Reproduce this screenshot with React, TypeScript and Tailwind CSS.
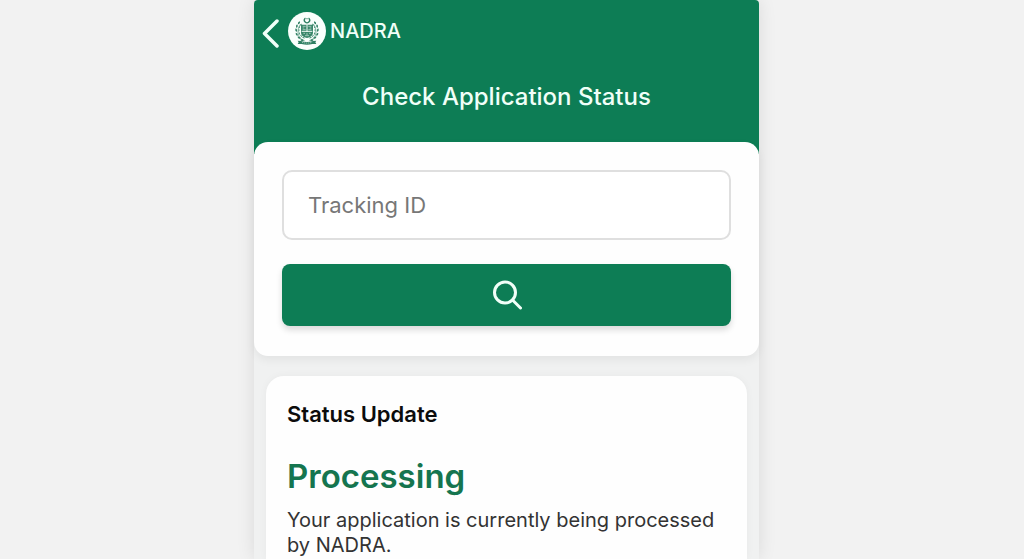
import { useState } from 'react';

const leaves = [
  { x: 43, y: 84, r: 70 },
  { x: 34, y: 77, r: 50 },
  { x: 27, y: 67, r: 25 },
  { x: 25, y: 55, r: 5 },
  { x: 27, y: 43, r: -15 },
  { x: 33, y: 33, r: -35 },
];

function Branch() {
  return (
    <g>
      <path d="M50 86C36 82 29 70 30 56c1-9 4-15 8-20" fill="none" stroke="#4d9378" strokeWidth="2" />
      {leaves.map((leaf) => (
        <g key={leaf.y} transform={`translate(${leaf.x} ${leaf.y}) rotate(${-leaf.r})`}>
          <path d="M-1-6C3-3 3 2 0 5C-4 2-4-3-1-6Z" fill="#2f7f62" />
          <path d="M8-4C10-1 10 3 7 5C5 3 6-1 8-4Z" fill="#4d9378" />
        </g>
      ))}
    </g>
  );
}

function Emblem() {
  return (
    <svg viewBox="0 0 114 114" className="size-[38px] shrink-0" aria-hidden="true">
      <circle cx="57" cy="57" r="57" fill="#fafffc" />
      {/* Crescent and star */}
      <path d="M51 19a8 8 0 1 0 12 0" fill="none" stroke="#2f7f62" strokeWidth="4" strokeLinecap="round" />
      <circle cx="57" cy="20" r="2" fill="#2f7f62" />
      <Branch />
      <g transform="translate(114 0) scale(-1 1)">
        <Branch />
      </g>
      {/* Quartered shield */}
      <path d="M39 38h36v24c0 8-6 13-18 16c-12-3-18-8-18-16Z" fill="#3a866a" />
      <path d="M57 38v22M41 58h32" stroke="#f0faf5" strokeWidth="3" />
      <path d="M44 43h9M44 48h5M44 53h9M61 43h9M65 48h5M61 53h9M46 64h5M54 66h6M63 64h5M51 71h12" stroke="#cfe6db" strokeWidth="2" />
      {/* Scroll */}
      <path d="M29 86l10 1c12 4 24 4 36 0l10-1-3 5 3 5-12 0c-10 3-22 3-32 0l-12 0 3-5Z" fill="#2f7f62" />
      <path d="M42 91c10 3 20 3 30 0" fill="none" stroke="#c4e0d3" strokeWidth="2" strokeDasharray="4 2" />
    </svg>
  );
}

function Header() {
  return (
    <header className="rounded-t-sm bg-[#0d7d55] pt-3 pb-[42px] text-[#f0fff8]">
      <div className="flex items-center pl-2">
        <button type="button" aria-label="Go back" className="mr-2 pt-1">
          <svg viewBox="0 0 18 30" className="h-[30px] w-[18px]" fill="none" stroke="currentColor" strokeWidth="3.5" strokeLinecap="round" strokeLinejoin="round">
            <path d="M15 3L2.500 15.500L15 28" />
          </svg>
        </button>
        <Emblem />
        <span className="ml-1 text-xl leading-6 font-medium">NADRA</span>
      </div>
      <h1 className="mt-8 text-center text-2xl leading-[30px] font-medium">Check Application Status</h1>
    </header>
  );
}

function SearchCard() {
  const [trackingId, setTrackingId] = useState('');

  return (
    <form
      onSubmit={(e) => e.preventDefault()}
      className="relative -mt-3 rounded-[14px] bg-[#fefefe] px-7 pt-7 pb-[30px] shadow-[0_4px_10px_rgba(0,0,0,0.06)]"
    >
      <input
        type="text"
        aria-label="Tracking ID"
        placeholder="Tracking ID"
        value={trackingId}
        onChange={(e) => setTrackingId(e.target.value)}
        className="block h-[70px] w-full rounded-[10px] border-2 border-[#dfdfdf] bg-white px-6 text-[22px] text-gray-800 outline-none placeholder:text-[#777777]"
      />
      <button
        type="submit"
        aria-label="Search"
        className="mt-6 flex h-[62px] w-full items-center justify-center rounded-lg bg-[#0d7d55] text-[#f0fff8] shadow-[0_4px_6px_rgba(0,0,0,0.14)]"
      >
        <svg viewBox="0 0 30 30" className="size-[30px]" fill="none" stroke="currentColor" strokeWidth="3" strokeLinecap="round">
          <circle cx="13" cy="12.500" r="10.500" />
          <path d="M21 20.500L28.500 28" />
        </svg>
      </button>
    </form>
  );
}

function StatusCard() {
  return (
    <section className="mx-3 mt-5 flex-1 rounded-t-[18px] bg-[#fefefe] px-[21px] pt-6 shadow-[0_0_8px_rgba(0,0,0,0.04)]">
      <h2 className="text-[22px] leading-7 font-semibold text-[#0c0c0c]">Status Update</h2>
      <p className="mt-7 text-[33px] leading-10 font-semibold text-[#15754f]">Processing</p>
      <p className="mt-3 text-xl leading-[25px] text-[#333333]">
        Your application is currently being processed by NADRA.
      </p>
    </section>
  );
}

export default function App() {
  return (
    <div className="flex min-h-screen justify-center bg-[#f2f2f2] pr-[11px] font-['Inter',sans-serif]">
      <main className="flex w-full max-w-[505px] flex-col rounded-t-sm bg-[#f0f1f1] shadow-[0_0_18px_rgba(0,0,0,0.10)]">
        <Header />
        <SearchCard />
        <StatusCard />
      </main>
    </div>
  );
}
